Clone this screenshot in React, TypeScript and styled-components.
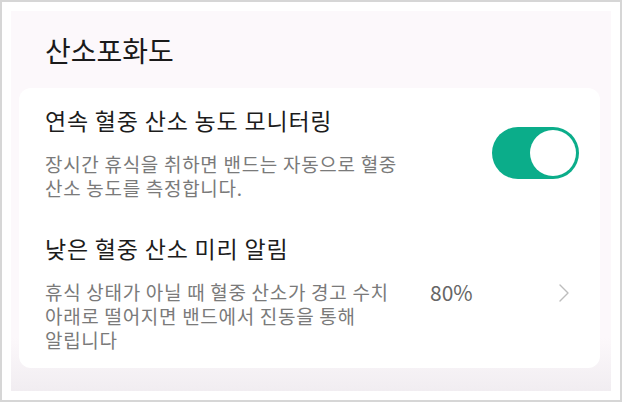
import React from 'react'
import styled, { createGlobalStyle } from 'styled-components'

const GlobalStyle = createGlobalStyle`
  html, body {
    margin: 0;
    padding: 0;
    background: #ffffff;
  }
  body {
    font-family: 'Noto Sans CJK KR', 'Noto Sans', sans-serif;
  }
`

const Frame = styled.div`
  box-sizing: border-box;
  width: 622px;
  height: 402px;
  border: 2px solid #d6d6d6;
  background: #ffffff;
  padding: 9px;
`

const Panel = styled.section`
  box-sizing: border-box;
  height: 380px;
  background: linear-gradient(to bottom, #fcf8fb 0%, #fcf8fb 86%, #f1edf1 100%);
  padding: 0 11px 0 8px;
  display: flex;
  flex-direction: column;
`

const Heading = styled.h1`
  margin: 0;
  padding: 21px 0 0 26px;
  height: 56px;
  font-size: 28px;
  font-weight: 400;
  line-height: 36px;
  color: #1a1a1a;
`

const Card = styled.div`
  background: #ffffff;
  border-radius: 12px;
  padding: 0 21px 0 26px;
`

const Row = styled.div`
  padding: 17px 0 16px;
  display: flex;
  align-items: center;
`

const TextCol = styled.div`
  flex: 1;
  display: flex;
  flex-direction: column;
`

const RowTitle = styled.div`
  font-size: 23px;
  line-height: 30px;
  letter-spacing: 0.8px;
  color: #1c1c1c;
`

const SubLine = styled.div`
  margin-top: 17px;
  display: flex;
  align-items: flex-start;
`

const SubText = styled.p`
  margin: 0;
  width: 362px;
  font-size: 19px;
  line-height: 24px;
  letter-spacing: 0.7px;
  word-break: keep-all;
  color: #7a7a7a;
`

const Value = styled.span`
  margin-left: 23px;
  font-size: 21px;
  line-height: 24px;
  color: #666666;
`

const Chevron = styled.svg`
  margin-left: auto;
  margin-right: 9px;
  margin-top: 3px;
  flex-shrink: 0;
`

const Toggle = styled.div<{ $on: boolean }>`
  box-sizing: border-box;
  width: 87px;
  height: 52px;
  border-radius: 26px;
  background: ${({ $on }) => ($on ? '#0bad8a' : '#cfcfcf')};
  padding: 3px;
  display: flex;
  justify-content: ${({ $on }) => ($on ? 'flex-end' : 'flex-start')};
  flex-shrink: 0;
`

const Knob = styled.div`
  width: 46px;
  height: 46px;
  border-radius: 50%;
  background: #ffffff;
`

const App: React.FC = () => {
  return (
    <>
      <GlobalStyle />
      <Frame>
        <Panel>
          <Heading>산소포화도</Heading>
          <Card>
            <Row>
              <TextCol>
                <RowTitle>연속 혈중 산소 농도 모니터링</RowTitle>
                <SubLine>
                  <SubText>장시간 휴식을 취하면 밴드는 자동으로 혈중 산소 농도를 측정합니다.</SubText>
                </SubLine>
              </TextCol>
              <Toggle $on>
                <Knob />
              </Toggle>
            </Row>
            <Row>
              <TextCol>
                <RowTitle>낮은 혈중 산소 미리 알림</RowTitle>
                <SubLine>
                  <SubText>휴식 상태가 아닐 때 혈중 산소가 경고 수치 아래로 떨어지면 밴드에서 진동을 통해 알립니다</SubText>
                  <Value>80%</Value>
                  <Chevron width="12" height="20" viewBox="0 0 12 20">
                    <polyline points="2,2 10,10 2,18" fill="none" stroke="#bdbdbd" strokeWidth="1.4" strokeLinecap="round" strokeLinejoin="round" />
                  </Chevron>
                </SubLine>
              </TextCol>
            </Row>
          </Card>
        </Panel>
      </Frame>
    </>
  )
}

export default App
